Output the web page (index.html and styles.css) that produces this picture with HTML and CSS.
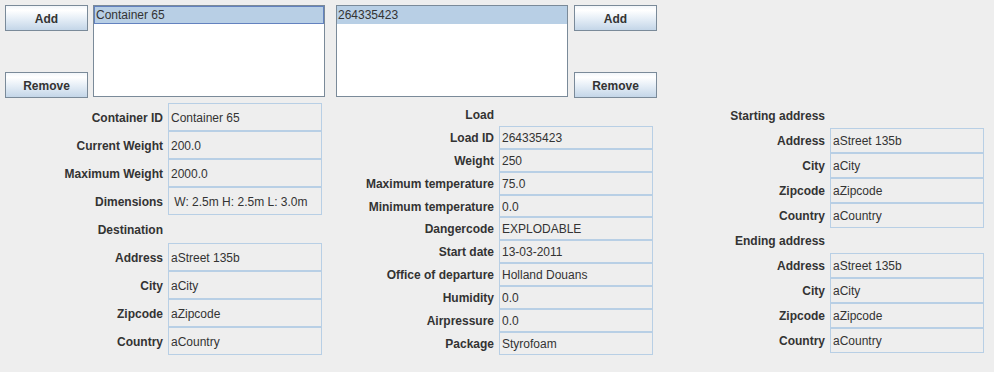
FILE: index.html
```html
<!DOCTYPE html>
<html>
<head>
<meta charset="utf-8">
<link rel="stylesheet" href="styles.css">
</head>
<body>
<div class="top">
  <div class="btncol">
    <button class="btn">Add</button>
    <button class="btn">Remove</button>
  </div>
  <div class="list list-a">
    <div class="item selected focused">Container 65</div>
  </div>
  <div class="list list-b">
    <div class="item selected">264335423</div>
  </div>
  <div class="btncol btncol-r">
    <button class="btn">Add</button>
    <button class="btn">Remove</button>
  </div>
</div>
<div class="bottom">
  <div class="form form-a">
    <div class="lbl">Container ID</div><div class="fld">Container 65</div>
    <div class="lbl">Current Weight</div><div class="fld">200.0</div>
    <div class="lbl">Maximum Weight</div><div class="fld">2000.0</div>
    <div class="lbl">Dimensions</div><div class="fld">&nbsp;W: 2.5m H: 2.5m L: 3.0m</div>
    <div class="lbl">Destination</div><div class="empty"></div>
    <div class="lbl">Address</div><div class="fld">aStreet 135b</div>
    <div class="lbl">City</div><div class="fld">aCity</div>
    <div class="lbl">Zipcode</div><div class="fld">aZipcode</div>
    <div class="lbl">Country</div><div class="fld">aCountry</div>
  </div>
  <div class="form form-b">
    <div class="lbl">Load</div><div class="empty"></div>
    <div class="lbl">Load ID</div><div class="fld">264335423</div>
    <div class="lbl">Weight</div><div class="fld">250</div>
    <div class="lbl">Maximum temperature</div><div class="fld">75.0</div>
    <div class="lbl">Minimum temperature</div><div class="fld">0.0</div>
    <div class="lbl">Dangercode</div><div class="fld">EXPLODABLE</div>
    <div class="lbl">Start date</div><div class="fld">13-03-2011</div>
    <div class="lbl">Office of departure</div><div class="fld">Holland Douans</div>
    <div class="lbl">Humidity</div><div class="fld">0.0</div>
    <div class="lbl">Airpressure</div><div class="fld">0.0</div>
    <div class="lbl">Package</div><div class="fld">Styrofoam</div>
  </div>
  <div class="form form-c">
    <div class="lbl">Starting address</div><div class="empty"></div>
    <div class="lbl">Address</div><div class="fld">aStreet 135b</div>
    <div class="lbl">City</div><div class="fld">aCity</div>
    <div class="lbl">Zipcode</div><div class="fld">aZipcode</div>
    <div class="lbl">Country</div><div class="fld">aCountry</div>
    <div class="lbl">Ending address</div><div class="empty"></div>
    <div class="lbl">Address</div><div class="fld">aStreet 135b</div>
    <div class="lbl">City</div><div class="fld">aCity</div>
    <div class="lbl">Zipcode</div><div class="fld">aZipcode</div>
    <div class="lbl">Country</div><div class="fld">aCountry</div>
  </div>
</div>
</body>
</html>
```
FILE: styles.css
```css
html, body {
  margin: 0;
  padding: 0;
  background: #eeeeee;
}
body {
  width: 994px;
  height: 372px;
  overflow: hidden;
  font-family: "Liberation Sans", Arial, sans-serif;
  font-size: 12px;
  color: #333333;
}
.top {
  display: flex;
  padding: 5px 0 0 5px;
  height: 93px;
}
.btncol {
  display: flex;
  flex-direction: column;
  justify-content: space-between;
  width: 83px;
  height: 93px;
}
.btncol-r {
  margin-left: 6px;
}
.btn {
  box-sizing: border-box;
  width: 83px;
  height: 26px;
  margin: 0;
  padding: 1px 0 0 0;
  border: 1px solid #7a8a99;
  border-radius: 0;
  background: linear-gradient(to bottom, #f2f6fa 0%, #ffffff 18%, #e4edf6 55%, #c4d6e8 100%);
  font-family: "Liberation Sans", Arial, sans-serif;
  font-size: 12px;
  font-weight: bold;
  color: #333333;
}
.list {
  box-sizing: border-box;
  width: 232px;
  height: 92px;
  border: 1px solid #7a8a99;
  background: #ffffff;
}
.list-a {
  margin-left: 5px;
}
.list-b {
  margin-left: 11px;
}
.item {
  box-sizing: border-box;
  height: 18px;
  line-height: 16px;
  padding: 1px 1px;
  font-size: 12px;
  color: #333333;
}
.selected {
  background: #b8cfe5;
}
.focused {
  border: 1px solid #6382bf;
  padding: 0 1px;
  line-height: 16px;
}
.bottom {
  display: flex;
  padding-top: 5px;
}
.form {
  display: grid;
  column-gap: 4px;
}
.form-a {
  margin-left: 5px;
  grid-template-columns: 159px 154px;
  grid-auto-rows: 28px;
}
.form-b {
  margin-left: 22px;
  margin-top: 0;
  grid-template-columns: 151px 154px;
  grid-auto-rows: 22.9px;
}
.form-c {
  margin-left: 27px;
  grid-template-columns: 146px 154px;
  grid-auto-rows: 25px;
}
.lbl {
  display: flex;
  align-items: center;
  justify-content: flex-end;
  font-weight: bold;
  color: #333333;
  white-space: nowrap;
  padding: 1px 1px 0 0;
}
.fld {
  box-sizing: border-box;
  display: flex;
  align-items: center;
  border: 1px solid #b8cfe5;
  padding: 1px 0 0 2px;
  color: #333333;
  white-space: nowrap;
  overflow: hidden;
}
```
